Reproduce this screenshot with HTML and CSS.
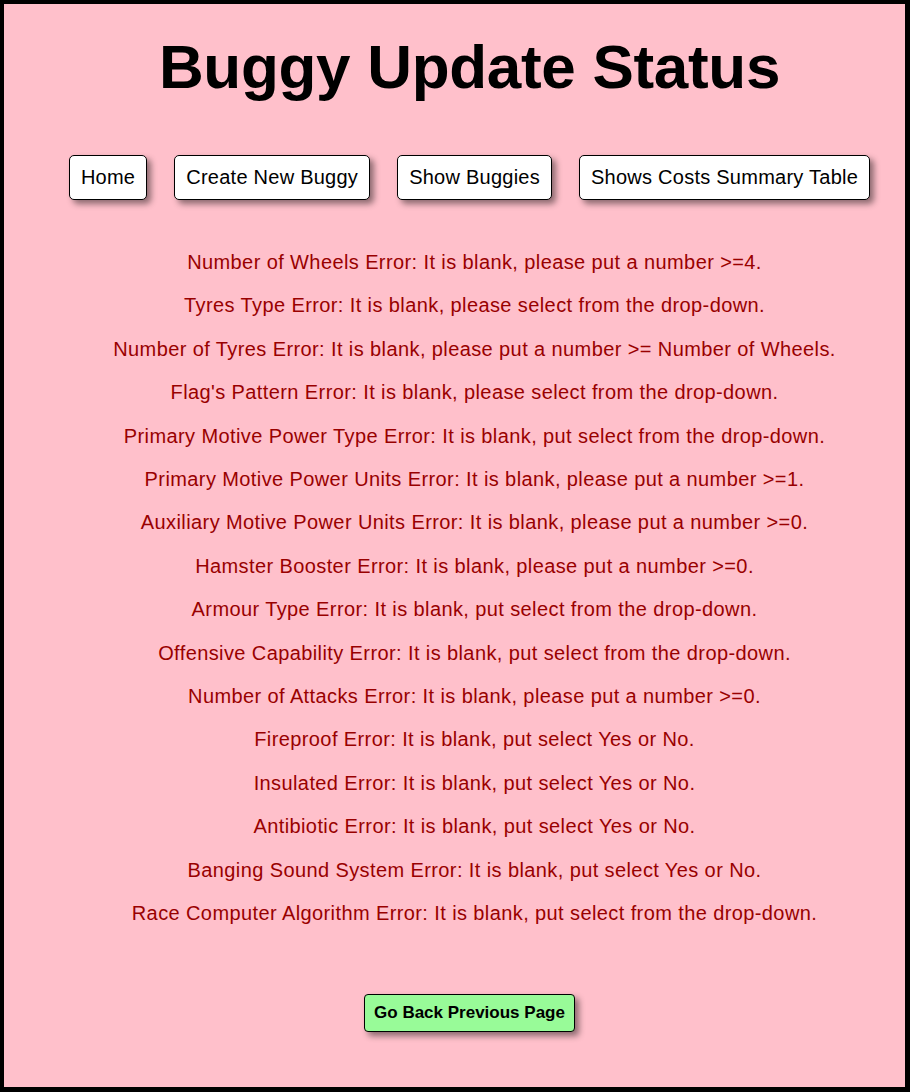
FILE: index.html
```html
<!DOCTYPE html>
<html lang="en">
<head>
<meta charset="utf-8">
<title>Buggy Update Status</title>
<link rel="stylesheet" href="styles.css">
</head>
<body>
<div class="page">
  <h1 class="title">Buggy Update Status</h1>
  <nav class="nav">
    <a class="nav-btn" href="#">Home</a>
    <a class="nav-btn" href="#">Create New Buggy</a>
    <a class="nav-btn" href="#">Show Buggies</a>
    <a class="nav-btn" href="#">Shows Costs Summary Table</a>
  </nav>
  <div class="errors">
    <p class="error">Number of Wheels Error: It is blank, please put a number &gt;=4.</p>
    <p class="error">Tyres Type Error: It is blank, please select from the drop-down.</p>
    <p class="error">Number of Tyres Error: It is blank, please put a number &gt;= Number of Wheels.</p>
    <p class="error">Flag's Pattern Error: It is blank, please select from the drop-down.</p>
    <p class="error">Primary Motive Power Type Error: It is blank, put select from the drop-down.</p>
    <p class="error">Primary Motive Power Units Error: It is blank, please put a number &gt;=1.</p>
    <p class="error">Auxiliary Motive Power Units Error: It is blank, please put a number &gt;=0.</p>
    <p class="error">Hamster Booster Error: It is blank, please put a number &gt;=0.</p>
    <p class="error">Armour Type Error: It is blank, put select from the drop-down.</p>
    <p class="error">Offensive Capability Error: It is blank, put select from the drop-down.</p>
    <p class="error">Number of Attacks Error: It is blank, please put a number &gt;=0.</p>
    <p class="error">Fireproof Error: It is blank, put select Yes or No.</p>
    <p class="error">Insulated Error: It is blank, put select Yes or No.</p>
    <p class="error">Antibiotic Error: It is blank, put select Yes or No.</p>
    <p class="error">Banging Sound System Error: It is blank, put select Yes or No.</p>
    <p class="error">Race Computer Algorithm Error: It is blank, put select from the drop-down.</p>
  </div>
  <div class="back-row">
    <button class="back-btn" type="button">Go Back Previous Page</button>
  </div>
</div>
</body>
</html>
```
FILE: styles.css
```css
html, body {
  margin: 0;
  padding: 0;
}
body {
  font-family: "Liberation Sans", Arial, sans-serif;
  background: #000;
}
.page {
  box-sizing: border-box;
  height: 1092px;
  border: 4px solid #000;
  border-right-width: 5px;
  border-bottom-width: 5px;
  background: #ffc0cb;
  padding: 0 0 0 30px;
  display: flex;
  flex-direction: column;
  align-items: center;
}
.title {
  margin: 27px 0 0;
  font-size: 62px;
  font-weight: bold;
  line-height: 71px;
  color: #000;
  letter-spacing: -0.3px;
}
.nav {
  margin-top: 53px;
  display: flex;
  gap: 27px;
  justify-content: center;
}
.nav-btn {
  display: block;
  padding: 10px 11px;
  line-height: 23px;
  font-size: 20px;
  letter-spacing: 0.25px;
  color: #000;
  text-decoration: none;
  background: #fff;
  border: 1px solid #000;
  border-radius: 5px;
  box-shadow: 4px 4px 6px rgba(0, 0, 0, 0.45);
}
.errors {
  margin-top: 41px;
  padding-left: 10px;
  display: flex;
  flex-direction: column;
  align-items: center;
}
.error {
  margin: 0;
  font-size: 20px;
  letter-spacing: 0.4px;
  line-height: 43.4px;
  color: #990000;
  text-align: center;
}
.back-row {
  margin-top: 58px;
  display: flex;
  justify-content: center;
}
.back-btn {
  font-family: "Liberation Sans", Arial, sans-serif;
  font-size: 17px;
  font-weight: bold;
  line-height: 20px;
  padding: 8px 9px;
  color: #000;
  background: #98fb98;
  border: 1.5px solid #000;
  border-radius: 4px;
  box-shadow: 4px 4px 6px rgba(0, 0, 0, 0.45);
}
```
